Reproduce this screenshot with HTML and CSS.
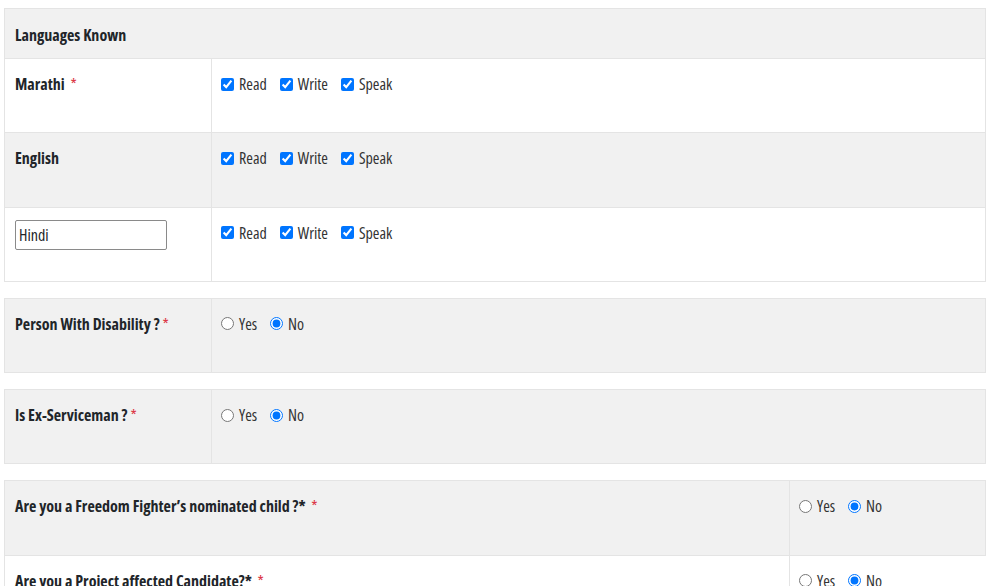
FILE: index.html
```html
<!DOCTYPE html>
<html lang="en">

<head>
    <meta charset="UTF-8">
    <meta name="viewport" content="width=device-width, initial-scale=1.0">
    <title>Other Details</title>
    <link rel="stylesheet" href="styles.css">
</head>

<body>

    <table class="grid">
        <tr class="head">
            <th colspan="2">Languages Known</th>
        </tr>
        <tr>
            <td class="label">Marathi &nbsp;<span class="req">*</span></td>
            <td class="opts">
                <label><input type="checkbox" checked> Read</label>
                <label><input type="checkbox" checked> Write</label>
                <label><input type="checkbox" checked> Speak</label>
            </td>
        </tr>
        <tr class="shade">
            <td class="label">English</td>
            <td class="opts">
                <label><input type="checkbox" checked> Read</label>
                <label><input type="checkbox" checked> Write</label>
                <label><input type="checkbox" checked> Speak</label>
            </td>
        </tr>
        <tr>
            <td class="label"><input type="text" class="lang" value="Hindi"></td>
            <td class="opts">
                <label><input type="checkbox" checked> Read</label>
                <label><input type="checkbox" checked> Write</label>
                <label><input type="checkbox" checked> Speak</label>
            </td>
        </tr>
    </table>

    <table class="grid">
        <tr class="shade">
            <td class="label">Person With Disability ? <span class="req">*</span></td>
            <td class="opts">
                <label><input type="radio" name="pwd"> Yes</label>
                <label><input type="radio" name="pwd" checked> No</label>
            </td>
        </tr>
    </table>

    <table class="grid">
        <tr class="shade">
            <td class="label">Is Ex-Serviceman ? <span class="req">*</span></td>
            <td class="opts">
                <label><input type="radio" name="exs"> Yes</label>
                <label><input type="radio" name="exs" checked> No</label>
            </td>
        </tr>
    </table>

    <table class="grid wide">
        <tr class="shade">
            <td class="label">Are you a Freedom Fighter’s nominated child ?* &nbsp;<span class="req">*</span></td>
            <td class="opts">
                <label><input type="radio" name="ff"> Yes</label>
                <label><input type="radio" name="ff" checked> No</label>
            </td>
        </tr>
    </table>
    <table class="grid wide last">
        <tr>
            <td class="label">Are you a Project affected Candidate?* &nbsp;<span class="req">*</span></td>
            <td class="opts">
                <label><input type="radio" name="pa"> Yes</label>
                <label><input type="radio" name="pa" checked> No</label>
            </td>
        </tr>
    </table>

</body>

</html>
```

FILE: styles.css
```css
body {
    margin: 8px 10px 0 4px;
    font-family: "Open Sans", "Liberation Sans", sans-serif;
    font-stretch: 85%;
    font-size: 16px;
    color: #212529;
    background-color: #fff;
}

.grid {
    width: 982px;
    border-collapse: collapse;
    margin-bottom: 16px;
}

.grid th,
.grid td {
    border: 1px solid #e4e4e4;
    text-align: left;
    vertical-align: top;
    padding: 13px 10px 14px;
    line-height: 24px;
}

.grid .head th {
    padding: 14px 10px 11px;
    background-color: #f1f1f1;
    font-weight: 700;
}

.grid td {
    height: 46.3px;
}

.shade td {
    background-color: #f1f1f1;
}

.label {
    width: 186px;
    font-weight: 700;
}

.req {
    color: #dc3545;
    font-weight: 400;
}

.opts label {
    display: inline-flex;
    align-items: center;
    margin-right: 10px;
    color: #333;
}

.grid .opts {
    padding-left: 9px;
}

.opts input {
    width: 13px;
    height: 13px;
    margin: 0 5px 0 0;
}

.lang {
    width: 152px;
    height: 30px;
    box-sizing: border-box;
    margin-top: -1px;
    padding: 0 3px;
    border: 1px solid #8a8a8a;
    border-radius: 2px;
    font-family: inherit;
    font-size: 16px;
    font-stretch: 85%;
    color: #212529;
}

.wide .label {
    width: 764px;
}

.wide {
    margin-bottom: 0;
}

.last {
    width: 985px;
    border-top: 0;
}

.last td {
    border-top: 0;
}
```
